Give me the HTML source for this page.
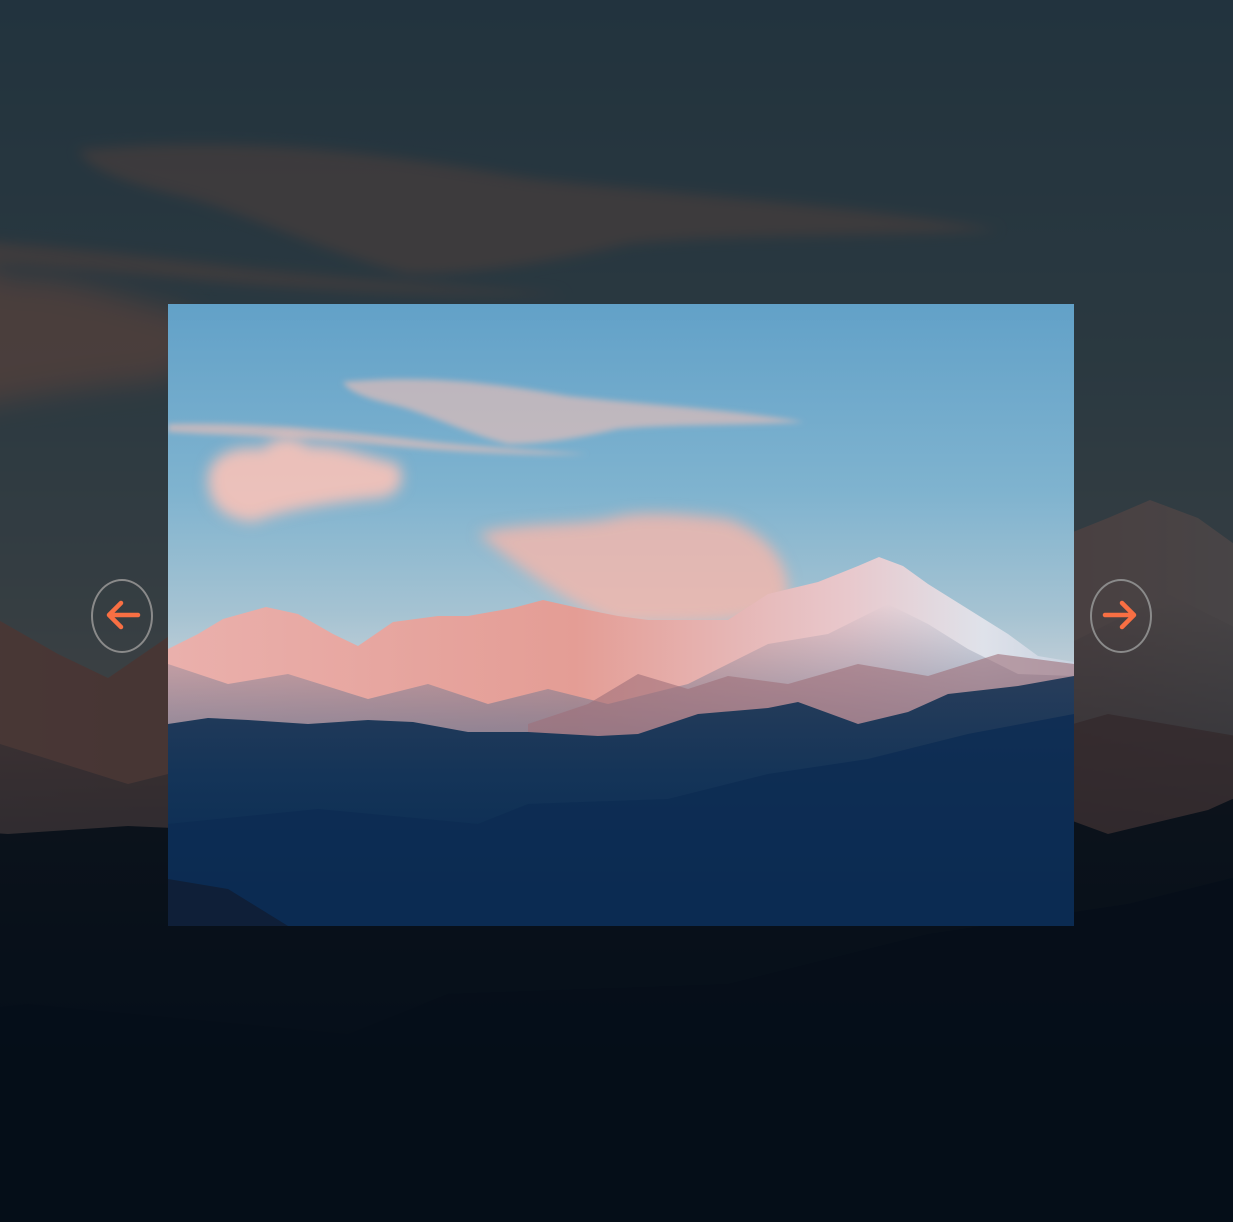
<!DOCTYPE html>
<html><head><meta charset="utf-8">
<style>
html,body{margin:0;padding:0;width:1233px;height:1222px;overflow:hidden;background:#050a12}
.wrap{position:absolute;left:0;top:0;width:1233px;height:1222px;overflow:hidden}
.bg{position:absolute;left:-272px;top:-6px;width:1812px;height:1244px;filter:brightness(0.32) saturate(0.85)}
.main{position:absolute;left:168px;top:304px;width:906px;height:622px}
.btn{position:absolute;top:579px;width:58px;height:70px;border:2px solid #8a8a8a;border-radius:50%}
</style></head><body>
<svg width="0" height="0" style="position:absolute">
<defs>
<linearGradient id="sky" x1="0" y1="0" x2="0" y2="1">
<stop offset="0" stop-color="#62a1c8"/><stop offset="0.3" stop-color="#7fb3cf"/><stop offset="0.5" stop-color="#a6c3d2"/><stop offset="0.6" stop-color="#c3cfd8"/></linearGradient>
<linearGradient id="dark" x1="0" y1="0" x2="0" y2="1">
<stop offset="0" stop-color="#283d5a"/><stop offset="0.4" stop-color="#143458"/><stop offset="1" stop-color="#052850"/></linearGradient>
<linearGradient id="snow" x1="0" y1="0" x2="1" y2="0">
<stop offset="0" stop-color="#eab0ac"/><stop offset="0.45" stop-color="#e49d95"/><stop offset="0.75" stop-color="#e8c8cc"/><stop offset="0.9" stop-color="#dfe2ea"/><stop offset="1" stop-color="#c8d2e0"/></linearGradient>
<linearGradient id="shade" x1="0" y1="0" x2="0" y2="1">
<stop offset="0" stop-color="#6c7690" stop-opacity="0"/><stop offset="1" stop-color="#6c7690" stop-opacity=".75"/></linearGradient>
<filter id="b6"><feGaussianBlur stdDeviation="7"/></filter>
<filter id="b3"><feGaussianBlur stdDeviation="3"/></filter>
<symbol id="scene" viewBox="0 0 906 622" preserveAspectRatio="none">
<rect width="906" height="622" fill="url(#sky)"/>
<g filter="url(#b3)" fill="#f2bfb6">
<path d="M175 78 C260 70 330 80 400 92 C470 100 560 105 636 118 C560 122 500 120 450 125 C420 132 380 140 340 140 C300 130 260 110 230 102 C200 95 180 88 175 78Z" opacity=".6"/>
<path d="M0 120 C80 118 160 125 250 136 C300 142 360 146 420 150 C340 152 260 146 180 138 C110 133 50 131 0 128Z" opacity=".6"/>
</g>
<g filter="url(#b6)">
<path d="M40 175 C40 150 70 140 95 145 C105 130 130 130 140 142 C170 140 190 150 230 160 C238 175 235 195 200 195 C160 200 120 205 85 218 C55 215 40 200 40 175Z" fill="#f7c2b8" opacity=".9"/>
<path d="M310 230 C350 218 400 222 440 215 C470 205 520 210 560 215 C600 230 625 260 620 300 C600 320 520 320 450 320 C400 300 360 270 310 230Z" fill="#f5b7ab" opacity=".8"/>
</g>
<path d="M0 345 L30 330 L55 315 L98 303 L130 310 L165 330 L190 342 L225 318 L270 312 L300 312 L345 304 L375 296 L415 305 L450 312 L480 316 L560 316 L600 290 L650 278 L690 262 L711 253 L735 262 L760 280 L800 305 L840 330 L870 352 L906 358 L906 440 L0 440Z" fill="url(#snow)"/>
<path d="M0 360 L60 380 L120 370 L200 395 L260 380 L320 400 L380 385 L440 400 L520 380 L600 340 L660 330 L720 300 L760 320 L800 345 L850 370 L906 372 L906 440 L0 440Z" fill="url(#shade)"/>
<path d="M360 420 L420 400 L470 370 L520 385 L560 372 L620 380 L690 360 L760 372 L830 350 L906 360 L906 440 L360 440Z" fill="#9e6f7a" opacity=".6"/>
<path d="M0 420 L40 414 L80 416 L140 420 L200 416 L245 418 L300 428 L360 428 L430 432 L470 430 L530 410 L600 404 L630 398 L690 420 L740 408 L780 390 L850 382 L906 372 L906 622 L0 622Z" fill="url(#dark)"/>
<path d="M0 520 L150 505 L310 520 L360 500 L500 495 L600 470 L700 455 L800 430 L906 410 L906 622 L0 622Z" fill="#0c2c52" opacity=".8"/>
<path d="M0 575 L60 585 L120 622 L0 622Z" fill="#0f1f38"/>
</symbol>
</defs></svg>
<div class="wrap">
<svg class="bg" viewBox="0 0 906 622" preserveAspectRatio="none"><use href="#scene"/></svg>
</div>
<svg class="main" viewBox="0 0 906 622" preserveAspectRatio="none"><use href="#scene"/></svg>
<div class="btn" style="left:91px"><svg width="58" height="70" viewBox="0 0 58 70"><path d="M45 34 H16 M28 22 L16 34 L28 46" fill="none" stroke="#f86f43" stroke-width="4.5" stroke-linecap="round" stroke-linejoin="round"/></svg></div>
<div class="btn" style="left:1090px"><svg width="58" height="70" viewBox="0 0 58 70"><path d="M13 34 H42 M30 22 L42 34 L30 46" fill="none" stroke="#f86f43" stroke-width="4.5" stroke-linecap="round" stroke-linejoin="round"/></svg></div>
</body></html>
